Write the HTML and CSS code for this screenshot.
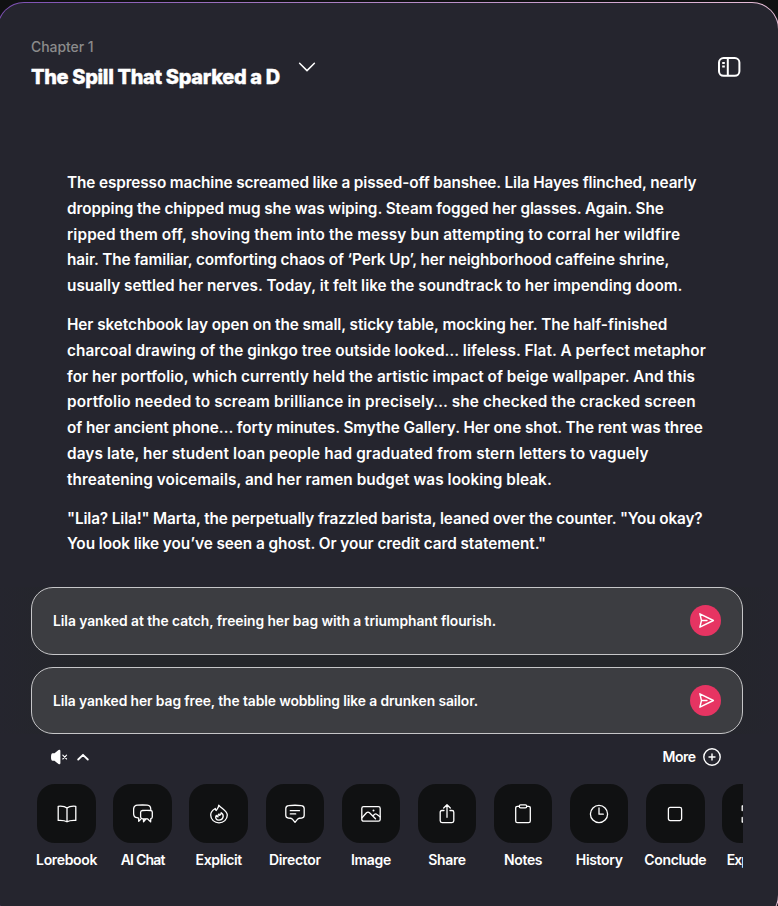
FILE: index.html
```
<!DOCTYPE html>
<html lang="en">
<head>
<meta charset="utf-8">
<title>The Spill That Sparked a D</title>
<link rel="stylesheet" href="styles.css">
</head>
<body>
<main class="panel">
  <div class="panel-body">
    <header class="header">
      <div class="heading">
        <p class="eyebrow">Chapter 1</p>
        <h1 class="title">The Spill That Sparked a D</h1>
      </div>
      <svg class="chevron" viewBox="0 0 18 18"><path d="M1.6 5.2 9 12.6 16.4 5.2"/></svg>
      <svg class="sidebar-icon" viewBox="0 0 24 22"><rect x="2" y="2" width="20.4" height="17.8" rx="4.6"/><path d="M10.8 2v17.8M5.2 6.9h2.6M5.2 10.6h2.6"/></svg>
    </header>
    <article class="story">
      <p>
        <span class="line t4">The espresso machine screamed like a pissed-off banshee. Lila Hayes flinched, nearly</span>
        <span class="line t2">dropping the chipped mug she was wiping. Steam fogged her glasses. Again. She</span>
        <span class="line w3">ripped them off, shoving them into the messy bun attempting to corral her wildfire</span>
        <span class="line t3">hair. The familiar, comforting chaos of ‘Perk Up’, her neighborhood caffeine shrine,</span>
        <span class="line">usually settled her nerves. Today, it felt like the soundtrack to her impending doom.</span>
      </p>
      <p>
        <span class="line t2">Her sketchbook lay open on the small, sticky table, mocking her. The half-finished</span>
        <span class="line w1">charcoal drawing of the ginkgo tree outside looked… lifeless. Flat. A perfect metaphor</span>
        <span class="line w1">for her portfolio, which currently held the artistic impact of beige wallpaper. And this</span>
        <span class="line w4">portfolio needed to scream brilliance in precisely… she checked the cracked screen</span>
        <span class="line t2">of her ancient phone… forty minutes. Smythe Gallery. Her one shot. The rent was three</span>
        <span class="line w2">days late, her student loan people had graduated from stern letters to vaguely</span>
        <span class="line w1">threatening voicemails, and her ramen budget was looking bleak.</span>
      </p>
      <p>
        <span class="line t5">"Lila? Lila!" Marta, the perpetually frazzled barista, leaned over the counter. "You okay?</span>
        <span class="line t1">You look like you’ve seen a ghost. Or your credit card statement."</span>
      </p>
    </article>
    <section class="suggestions">
      <div class="suggestion">
        <span class="suggestion-text t1">Lila yanked at the catch, freeing her bag with a triumphant flourish.</span>
        <button class="send"><svg viewBox="0 0 18 18"><path d="M2 1.9 16.3 9 2 16.1 3.7 9zM3.7 9h5.8"/></svg></button>
      </div>
      <div class="suggestion">
        <span class="suggestion-text t3">Lila yanked her bag free, the table wobbling like a drunken sailor.</span>
        <button class="send"><svg viewBox="0 0 18 18"><path d="M2 1.9 16.3 9 2 16.1 3.7 9zM3.7 9h5.8"/></svg></button>
      </div>
    </section>
    <div class="controls">
      <svg class="mute" viewBox="0 0 18 16"><path class="solid" d="M2.500 4.200H4.500L8.500.9Q10.400.1 10.400 2v12q0 1.900-1.900 1.100L4.500 11.800H2.500Q1 11.800 1 8t1.500-3.800z"/><path d="m12.800 6.200 3.800 3.800m0-3.800-3.800 3.800"/></svg>
      <svg class="up" viewBox="0 0 12 8"><path d="M1.2 6.5 6 1.8l4.800 4.700"/></svg>
      <span class="more">More</span>
      <svg class="plus" viewBox="0 0 18 18"><circle cx="9" cy="9" r="8.2"/><path d="M9 6v6M6 9h6"/></svg>
    </div>
    <nav class="tools">
      <div class="tool"><div class="tile"><svg viewBox="0 0 20 20"><path d="M10 4.1C8 2.3 4.8 2 1.2 2.3v14.1c3.6-.2 6.4-.1 8.8 1.4 2.4-1.5 5.2-1.6 8.8-1.4V2.3C15.2 2 12 2.3 10 4.1zM10 4.1v13.5"/></svg></div><span>Lorebook</span></div>
      <div class="tool"><div class="tile"><svg viewBox="0 0 20 20"><path d="M5.700 17.300V14.200L3.900 13.700C1.500 13.400.700 12.300.600 9.500V5.500C.600 2.600 1.600 1.400 4.500 1.200q5-.4 9.800 0c2.400.2 3.400 1.500 3.500 4.200M5.700 17.300l2-1.900"/><path d="M9.500 6.500q4.300-.3 8.300 0 1.500.2 1.500 1.700v4.800q0 1.400-1.500 1.600l-.2 3.300-3.100-3.100h-1.700q-2 0-3.300 0-1.900-.2-1.900-1.800V8.200q.1-1.600 1.900-1.700zM10.500 14.800v3l2.600-3"/></svg></div><span class="ai">AI Chat</span></div>
      <div class="tool"><div class="tile"><svg viewBox="0 0 20 20"><path d="M9.700 1.200c.1 2.300-1.600 3.600-2.500 5.300-.6-.5-.9-1.200-.9-2C3.700 6 1.700 8.300 1.700 11.100a8.300 7.800 0 0 0 16.600 0C18.300 6.600 13 4.900 9.700 1.200z"/><path d="M12.200 8.700c-.1 1.500-.8 2-1.400 2.600-.6-.3-.8-.8-.8-1.400-1.200 1-1.400 2.100-1 3-.9 0-1.500-.5-1.700-1.500-1.500 2.200-.2 4.700 2.700 4.700 4.300 0 5.700-5 2.200-7.400z"/></svg></div><span>Explicit</span></div>
      <div class="tool"><div class="tile"><svg viewBox="0 0 20 20"><path d="M3.5 1.7q6.500-.9 13 0 2.600.3 2.700 2.800v6.800q0 2.500-2.500 2.700-3 .1-3.900.9L10 18.300 7.200 14.900q-.9-.8-3.900-.9Q.8 13.800.8 11.300V4.500q.1-2.500 2.700-2.800zM5.300 6.700h9.200M5.300 9.900h5.400"/></svg></div><span>Director</span></div>
      <div class="tool"><div class="tile"><svg viewBox="0 0 20 20"><rect x=".8" y="2.6" width="18.4" height="14.6" rx="1.8"/><path d="m1 13.800 4.500-5Q7 7.500 8.500 8.800l6 6M11.700 12l2-1.700q1-.8 2 0l3.300 2.500"/><circle class="dot" cx="12.5" cy="6.5" r="1"/></svg></div><span>Image</span></div>
      <div class="tool"><div class="tile"><svg viewBox="0 0 20 20"><path d="M7 6.500H5q-1.800 0-1.800 1.800v8.500q0 1.800 1.800 1.800h10q1.800 0 1.800-1.800V8.300q0-1.800-1.800-1.800h-2M10 13.300V1M6.700 4 10 .8 13.300 4"/></svg></div><span>Share</span></div>
      <div class="tool"><div class="tile"><svg viewBox="0 0 20 20"><path d="M6.300 2.400H4.400q-1.700 0-1.700 1.700v12.800q0 1.700 1.700 1.700h11.200q1.700 0 1.700-1.700V4.100q0-1.700-1.700-1.700h-1.900"/><rect x="6.3" y=".8" width="7.4" height="3" rx="1.3"/></svg></div><span>Notes</span></div>
      <div class="tool"><div class="tile"><svg viewBox="0 0 20 20"><circle cx="10" cy="10" r="8.6"/><path d="M10 4v6.2h4.300"/></svg></div><span>History</span></div>
      <div class="tool"><div class="tile"><svg viewBox="0 0 20 20"><rect x="3.4" y="3.4" width="13.2" height="13.2" rx="1.8"/></svg></div><span>Conclude</span></div>
      <div class="tool"><div class="tile"><svg viewBox="0 0 20 20"><path d="M6 2H1.200v4.500M1.200 13.500V18H6M14 2h4.800v4.500M18.800 13.500V18H14"/></svg></div><span class="expand">Expand</span></div>
    </nav>
  </div>
</main>
</body>
</html>
```
FILE: styles.css
```
* { box-sizing: border-box; }
html, body { height: 100%; }
html { overflow: hidden; }
body {
  margin: 0;
  padding-top: 2px;
  background: #101112;
  color: #fff;
  font-family: Inter, "Liberation Sans", sans-serif;
  overflow: hidden;
}
p, h1 { margin: 0; }
svg { display: block; flex: none; fill: none; stroke: #fff; stroke-linecap: round; stroke-linejoin: round; }

.panel {
  width: 782px;
  height: 920px;
  margin-left: -3px;
  padding: 1px;
  border-radius: 27px;
  background: linear-gradient(90deg, #7c4fb3, #e9bfd8);
}
.panel-body {
  height: 100%;
  padding: 0 35px 0 33px;
  border-radius: 26px;
  background: #25252e;
}

.header { display: flex; height: 167px; padding-top: 34px; }
.heading { width: 267px; }
.eyebrow { font-size: 14px; font-weight: 500; line-height: 20px; letter-spacing: -0.06px; color: #8b8b8b; }
.title { margin-top: 6px; font-size: 20px; font-weight: 800; line-height: 28px; letter-spacing: -0.34px; white-space: nowrap; -webkit-text-stroke: 0.4px #fff; }
.chevron { width: 18px; height: 18px; margin-top: 21px; stroke-width: 1.5; }
.sidebar-icon { width: 24px; height: 22px; margin: 19px 2.5px 0 auto; stroke-width: 2; stroke-linecap: butt; }

.story { height: 417px; padding-left: 36px; font-size: 15.35px; font-weight: 600; line-height: 25.8px; white-space: nowrap; }
.story p + p { margin-top: 13px; }
.line { display: block; }
.t1 { letter-spacing: -0.06px; }
.t2 { letter-spacing: -0.076px; }
.t3 { letter-spacing: -0.102px; }
.t4 { letter-spacing: -0.12px; }
.t5 { letter-spacing: -0.142px; }
.w1 { letter-spacing: 0.048px; }
.w2 { letter-spacing: 0.087px; }
.w3 { letter-spacing: 0.113px; }
.w4 { letter-spacing: 0.135px; }

.suggestions {
  display: flex;
  flex-direction: column;
  gap: 12px;
  margin: 0 -35px 0 -33px;
  padding: 0 35px 0 33px;
  background: linear-gradient(90deg, #25252e, #24262a 12%, #24262a 88%, #25252e);
}
.suggestion {
  display: flex;
  align-items: center;
  justify-content: space-between;
  width: 712px;
  height: 68px;
  padding: 0 21.5px 1px 21px;
  border: 1px solid #c6c6c8;
  border-radius: 22px;
  background: #3c3d41;
  font-size: 13.85px;
  font-weight: 600;
}
.suggestion + .suggestion { height: 67px; padding-bottom: 0; }
.send { display: grid; place-items: center; width: 31px; height: 31px; padding: 0 0 0 2px; border: 0; border-radius: 50%; background: #e63462; }
.send svg { width: 17px; height: 17px; stroke-width: 1.5; }

.controls { display: flex; align-items: center; height: 46px; padding: 0 22.5px 0 19px; }
.mute { width: 18px; height: 16px; stroke-width: 1.1; }
.mute .solid { fill: #fff; stroke: none; }
.up { width: 12px; height: 8px; margin-left: 9px; stroke-width: 1.8; }
.more { margin: -1px 0 0 auto; font-size: 14px; font-weight: 600; letter-spacing: -0.5px; }
.plus { width: 18px; height: 18px; margin-left: 7px; stroke-width: 1.4; }

.tools { display: flex; width: 715px; margin-left: -3px; padding: 4px 0 0 0.5px; overflow: hidden; }
.tool { display: flex; flex: 0 0 76.1px; flex-direction: column; align-items: center; font-size: 14px; font-weight: 600; line-height: 20px; letter-spacing: -0.35px; }
.tile { display: grid; place-items: center; width: 58.5px; height: 59px; margin-bottom: 7px; border-radius: 18px; background: #101112; }
.tile svg { width: 20px; height: 20px; stroke-width: 1.3; }
.tile .dot { fill: #fff; stroke: none; }
.ai { letter-spacing: -0.8px; }
.expand { align-self: flex-start; margin-left: 13.5px; letter-spacing: -1px; }
```
